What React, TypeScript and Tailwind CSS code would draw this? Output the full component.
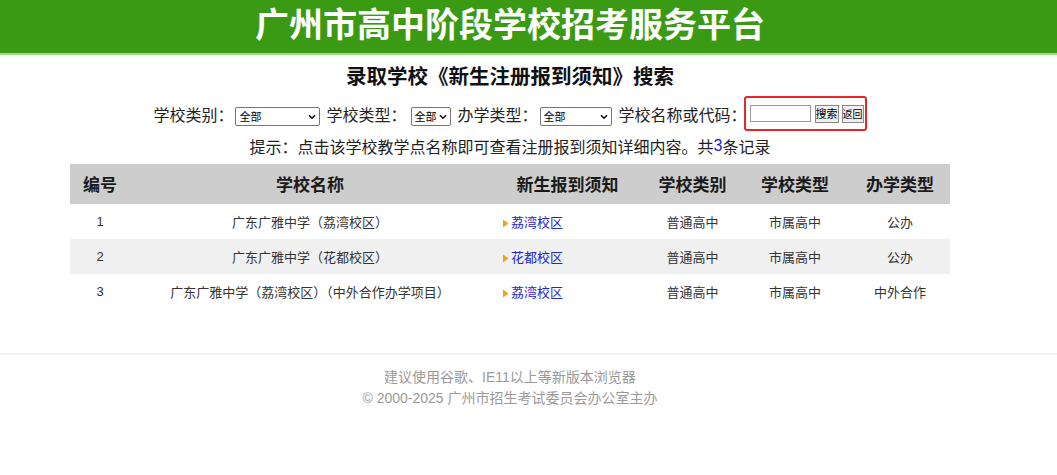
const rows = [
  { no: 1, name: "广东广雅中学（荔湾校区）", link: "荔湾校区", cat: "普通高中", type: "市属高中", run: "公办" },
  { no: 2, name: "广东广雅中学（花都校区）", link: "花都校区", cat: "普通高中", type: "市属高中", run: "公办" },
  { no: 3, name: "广东广雅中学（荔湾校区）（中外合作办学项目）", link: "荔湾校区", cat: "普通高中", type: "市属高中", run: "中外合作" },
];

const cjk = { fontFamily: '"Microsoft YaHei","Noto Sans CJK SC",sans-serif' };
const song = { fontFamily: '"SimSun","Noto Sans CJK SC",serif' };
const arial = { fontFamily: '"Liberation Sans","Noto Sans CJK SC",sans-serif' };

function Select({ width, options }: { width: string; options: string[] }) {
  return (
    <span className="relative inline-flex">
      <select
        className={`${width} h-[19px] appearance-none border border-[#767676] rounded-[2px] bg-white text-[11px] leading-none text-black pl-[3px] pr-[12px]`}
        style={cjk}
      >
        {options.map((o) => (
          <option key={o}>{o}</option>
        ))}
      </select>
      <svg
        width="8"
        height="6"
        viewBox="0 0 8 6"
        className="pointer-events-none absolute right-[4px] top-[7px]"
      >
        <path d="M1 1.2 L4 4.2 L7 1.2" fill="none" stroke="#111" strokeWidth="1.6" />
      </svg>
    </span>
  );
}

export default function App() {
  return (
    <div className="min-h-[475px] bg-white">
      <header className="h-[55px] bg-[#3a9a13] border-b-2 border-[#a3d98c]">
        <div className="w-[1020px] text-center">
          <h1 className="text-[34px] leading-[46px] font-bold text-white" style={cjk}>
            广州市高中阶段学校招考服务平台
          </h1>
        </div>
      </header>

      <div className="w-[1020px] flex flex-col items-center">
        <h2 className="h-[40px] flex items-center text-[20.5px] font-bold text-[#111]" style={cjk}>
          录取学校《新生注册报到须知》搜索
        </h2>

        <div className="h-[37px] flex items-center text-[16px] text-[#222]" style={song}>
          <span>学校类别：</span>
          <span className="ml-[2px]"><Select width="w-[85px]" options={["全部", "普通高中", "中职学校"]} /></span>
          <span className="ml-[6px]">学校类型：</span>
          <span className="ml-[4px]"><Select width="w-[40px]" options={["全部"]} /></span>
          <span className="ml-[7px]">办学类型：</span>
          <span className="ml-[2px]"><Select width="w-[72px]" options={["全部", "公办", "民办"]} /></span>
          <span className="ml-[7px]">学校名称或代码：</span>
          <span className="ml-[-3px] h-[35px] flex items-center gap-[4px] border-2 border-[#e8262a] rounded-[3px] pl-[4px] pr-[1px]">
            <input className="w-[61px] h-[17px] border border-[#9a9a9a] bg-white" />
            <button className="w-[24px] h-[18px] border border-[#8a8a8a] bg-[#efefef] text-[11px] leading-none text-black" style={cjk}>
              搜索
            </button>
            <button className="ml-[-1px] w-[22px] h-[18px] border border-[#8a8a8a] bg-[#efefef] text-[10px] leading-none text-black" style={cjk}>
              返回
            </button>
          </span>
        </div>

        <p className="h-[27px] flex items-center text-[16px] text-[#222]" style={song}>
          提示：点击该学校教学点名称即可查看注册报到须知详细内容。共<span className="text-[#2020d8]" style={arial}>3</span>条记录
        </p>

        <table className="mt-[5px] w-[880px] border-collapse text-[13px] text-[#333]" style={cjk}>
          <thead>
            <tr className="h-[40px] bg-[#cdcdcd] text-[17px] font-bold text-[#1a1a1a]">
              <th className="w-[60px] font-bold">编号</th>
              <th className="w-[360px] font-bold">学校名称</th>
              <th className="w-[155px] font-bold">新生报到须知</th>
              <th className="w-[95px] font-bold">学校类别</th>
              <th className="w-[110px] font-bold">学校类型</th>
              <th className="w-[100px] font-bold">办学类型</th>
            </tr>
          </thead>
          <tbody>
            {rows.map((r, i) => (
              <tr key={r.no} className={`h-[35px] ${i % 2 === 1 ? "bg-[#f0f0f0]" : "bg-white"}`}>
                <td className="text-center" style={arial}>{r.no}</td>
                <td className="text-center">{r.name}</td>
                <td className="pl-[13px]">
                  <span className="flex items-center gap-[2px]">
                    <svg width="6" height="9" viewBox="0 0 6 9" className="mt-[4px]">
                      <path d="M0 0.5 L5.5 4.5 L0 8.5 Z" fill="#f2a116" />
                    </svg>
                    <a href="#" className="text-[#2424d6]">{r.link}</a>
                  </span>
                </td>
                <td className="text-center">{r.cat}</td>
                <td className="text-center">{r.type}</td>
                <td className="text-center">{r.run}</td>
              </tr>
            ))}
          </tbody>
        </table>
      </div>

      <footer className="mt-[44px] border-t-2 border-[#f2f2f2]">
        <div className="w-[1020px] pt-[12px] flex flex-col items-center text-[14px] leading-[21px] text-[#9a9a9a]" style={arial}>
          <p>建议使用谷歌、IE11以上等新版本浏览器</p>
          <p>© 2000-2025 广州市招生考试委员会办公室主办</p>
        </div>
      </footer>
    </div>
  );
}
